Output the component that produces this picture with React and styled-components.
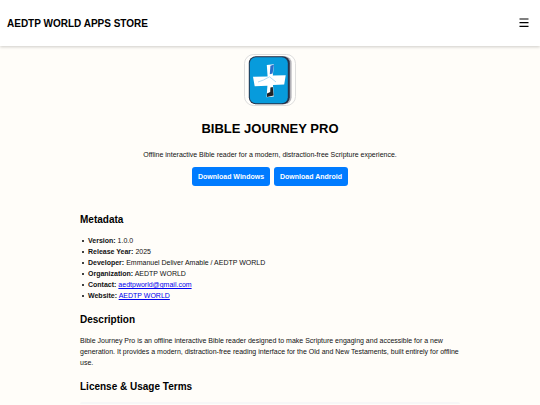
import React from 'react';
import styled, { createGlobalStyle } from 'styled-components';

const GlobalStyle = createGlobalStyle`
  * {
    box-sizing: border-box;
  }
  body {
    margin: 0;
    background: #fffdf9;
    color: #111;
    font-family: "Liberation Sans", Arial, sans-serif;
    font-size: 7px;
    line-height: 11px;
  }
`;

const Header = styled.header`
  display: flex;
  align-items: center;
  justify-content: space-between;
  padding: 16px 11px 14px 7px;
  background: #fff;
  box-shadow: 0 1px 3px rgba(0, 0, 0, 0.2);
`;
const Brand = styled.div`
  font-size: 10px;
  line-height: 16px;
  font-weight: bold;
  color: #000;
`;
const MenuButton = styled.button`
  display: flex;
  align-self: flex-start;
  border: none;
  padding: 2px 0 0;
  background: none;
  color: #000;
  cursor: pointer;
`;
const Hero = styled.section`
  display: flex;
  flex-direction: column;
  align-items: center;
  padding: 8px 8px 0;
  text-align: center;
`;
const Logo = styled.svg`
  width: 52px;
  height: 52px;
`;
const Title = styled.h1`
  margin: 12px 0 9px;
  font-size: 13px;
  line-height: 22px;
  color: #000;
`;
const Tagline = styled.p`
  margin: 0;
`;
const Actions = styled.div`
  display: flex;
  gap: 4px;
  margin-top: 7px;
`;
const DownloadButton = styled.button`
  border: none;
  border-radius: 3px;
  padding: 4px 6px;
  background: #007bff;
  color: #fff;
  font: bold 7px/11px "Liberation Sans", Arial, sans-serif;
  cursor: pointer;
`;
const Content = styled.main`
  max-width: 380px;
  margin: 26px auto 0;
`;
const Heading = styled.h2`
  margin: 0 0 7px;
  font-size: 10px;
  line-height: 16px;
  color: #000;
`;
const MetaList = styled.ul`
  margin: 0 0 11px;
  padding-left: 8px;
  list-style: none;
`;
const MetaItem = styled.li`
  &::before {
    content: "";
    display: inline-block;
    width: 2px;
    height: 2px;
    margin: 0 4px 0 -6px;
    border-radius: 1px;
    background: #000;
    vertical-align: middle;
  }
`;
const Link = styled.a`
  color: #0000ee;
  text-decoration: underline;
`;
const Paragraph = styled.p`
  margin: 0 0 11px;
`;
const Terms = styled.div`
  height: 2px;
  border-radius: 3px 3px 0 0;
  background: #f7f7f7;
`;

const metadata = [
  { label: 'Version', value: '1.0.0' },
  { label: 'Release Year', value: '2025' },
  { label: 'Developer', value: 'Emmanuel Deliver Amable / AEDTP WORLD' },
  { label: 'Organization', value: 'AEDTP WORLD' },
  { label: 'Contact', value: 'aedtpworld@gmail.com', href: 'mailto:aedtpworld@gmail.com' },
  { label: 'Website', value: 'AEDTP WORLD', href: '#' },
];

const AppLogo = () => (
  <Logo viewBox="0 0 52 52" role="img" aria-label="Bible Journey Pro">
    <rect x="0.5" y="0.5" width="51" height="51" rx="9" fill="#fffefc" stroke="#d5d5d5" strokeWidth="0.8" />
    <rect x="7" y="2.2" width="40.6" height="48" rx="7" fill="#b4b2b8" />
    <rect x="4.8" y="2.2" width="41" height="48" rx="7" fill="#26324a" />
    <rect x="5.8" y="3.2" width="38" height="46" rx="6" fill="#079bdc" />
    <path d="M22.8 11 L30 10.3 L28.8 21.6 L41.7 21.2 L40.2 30.6 L29 31 L29.8 42.4 L22.6 43.3 L23.4 31.8 L10.7 32.2 L9 22.8 L23.6 22.6 Z" fill="#fff" />
    <path d="M26.4 11.8 L30 10.5 L28.6 19.5 L25.8 20.2 Z" fill="#2a6fcb" />
    <path d="M14 28 L19.5 26 L25.5 22.8 L32 28" fill="none" stroke="#8fcaec" strokeWidth="0.7" />
    <path d="M26.4 33.5 L28.8 33 L29.6 41.4 L23 43 L23 39.4 L26.2 38 Z" fill="#202226" />
  </Logo>
);

const MenuIcon = () => (
  <svg width="10" height="10" viewBox="0 0 10 10" aria-hidden="true">
    <path d="M0.5 1 H9.5 M0.5 4.6 H9.5 M0.5 8.4 H9.5" stroke="currentColor" strokeWidth="1.2" />
  </svg>
);

const App = () => {
  return (
    <>
      <GlobalStyle />
      <Header>
        <Brand>AEDTP WORLD APPS STORE</Brand>
        <MenuButton type="button" aria-label="Menu">
          <MenuIcon />
        </MenuButton>
      </Header>
      <Hero>
        <AppLogo />
        <Title>BIBLE JOURNEY PRO</Title>
        <Tagline>Offline interactive Bible reader for a modern, distraction-free Scripture experience.</Tagline>
        <Actions>
          <DownloadButton type="button">Download Windows</DownloadButton>
          <DownloadButton type="button">Download Android</DownloadButton>
        </Actions>
      </Hero>
      <Content>
        <Heading>Metadata</Heading>
        <MetaList>
          {metadata.map((item) => (
            <MetaItem key={item.label}>
              <strong>{item.label}:</strong>{' '}
              {item.href ? <Link href={item.href}>{item.value}</Link> : item.value}
            </MetaItem>
          ))}
        </MetaList>
        <Heading>Description</Heading>
        <Paragraph>
          Bible Journey Pro is an offline interactive Bible reader designed to make Scripture engaging
          and accessible for a new generation. It provides a modern, distraction-free reading interface
          for the Old and New Testaments, built entirely for offline use.
        </Paragraph>
        <Heading>License &amp; Usage Terms</Heading>
        <Terms />
      </Content>
    </>
  );
};

export default App;
